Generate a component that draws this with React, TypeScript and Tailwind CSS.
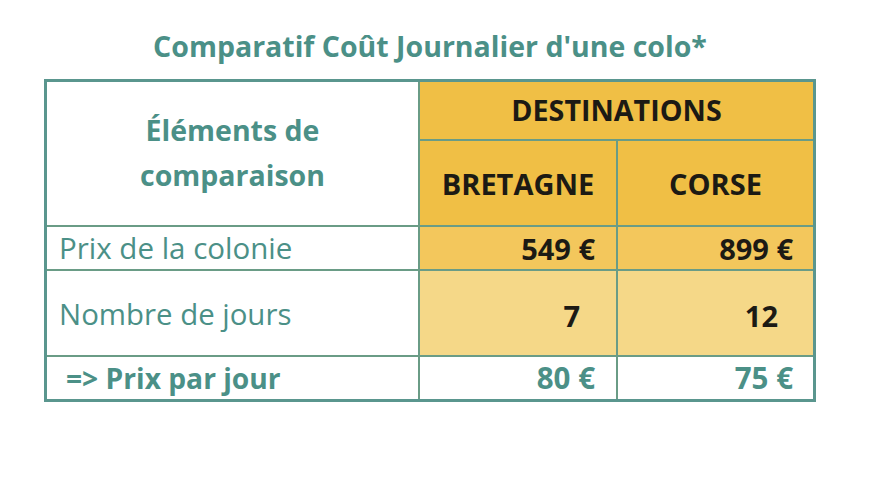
import React from "react";

const teal = "text-[#4b9087]";

export default function App() {
  return (
    <div className="w-[880px] h-[480px] bg-white font-['Open_Sans','Liberation_Sans',sans-serif]">
      <div className="pt-[32px] flex flex-col items-start pl-[44px]">
        <div className={`w-[772px] text-center text-[28.5px] leading-[28px] font-bold ${teal}`}>
          Comparatif Coût Journalier d'une colo*
        </div>
        <div className="mt-[19px] border-[3px] border-[#5a968e] bg-[#6a9c86] grid grid-cols-[371px_196px_195px] grid-rows-[57px_84px_42px_84px_42px] gap-[2px] w-[772px]">
          <div className="row-span-2 bg-white flex items-center justify-center pb-[2px]">
            <div className={`text-center text-[28.5px] leading-[45px] font-bold ${teal}`}>
              Éléments de
              <br />
              comparaison
            </div>
          </div>
          <div className="col-span-2 bg-[#f0bf45] flex items-center justify-center text-[28.7px] leading-none font-bold text-[#1c1a14]">
            DESTINATIONS
          </div>
          <div className="bg-[#f0bf45] flex items-center justify-center text-[29px] leading-none font-bold text-[#1c1a14]">
            BRETAGNE
          </div>
          <div className="bg-[#f0bf45] flex items-center justify-center text-[29px] leading-none font-bold text-[#1c1a14]">
            CORSE
          </div>

          <div className={`bg-white flex items-center pl-[12px] text-[29.5px] leading-none ${teal}`}>Prix de la colonie</div>
          <div className="bg-[#f3c75c] flex items-center justify-end pr-[21px] text-[29px] leading-none font-bold text-[#1c1a14]">549 €</div>
          <div className="bg-[#f3c75c] flex items-center justify-end pr-[20px] text-[29px] leading-none font-bold text-[#1c1a14]">899 €</div>

          <div className={`bg-white flex items-center pl-[12px] pt-[4px] text-[29.4px] leading-none ${teal}`}>Nombre de jours</div>
          <div className="bg-[#f5d888] flex items-center justify-end pr-[36px] pt-[4px] text-[29px] leading-none font-bold text-[#1c1a14]">7</div>
          <div className="bg-[#f5d888] flex items-center justify-end pr-[35px] pt-[4px] text-[29px] leading-none font-bold text-[#1c1a14]">12</div>

          <div className={`bg-white flex items-center pl-[19px] text-[28.2px] leading-none font-bold ${teal}`}>=&gt; Prix par jour</div>
          <div className={`bg-white flex items-center justify-end pr-[21px] text-[29.5px] leading-none font-bold ${teal}`}>80 €</div>
          <div className={`bg-white flex items-center justify-end pr-[20px] text-[29.5px] leading-none font-bold ${teal}`}>75 €</div>
        </div>
      </div>
    </div>
  );
}
